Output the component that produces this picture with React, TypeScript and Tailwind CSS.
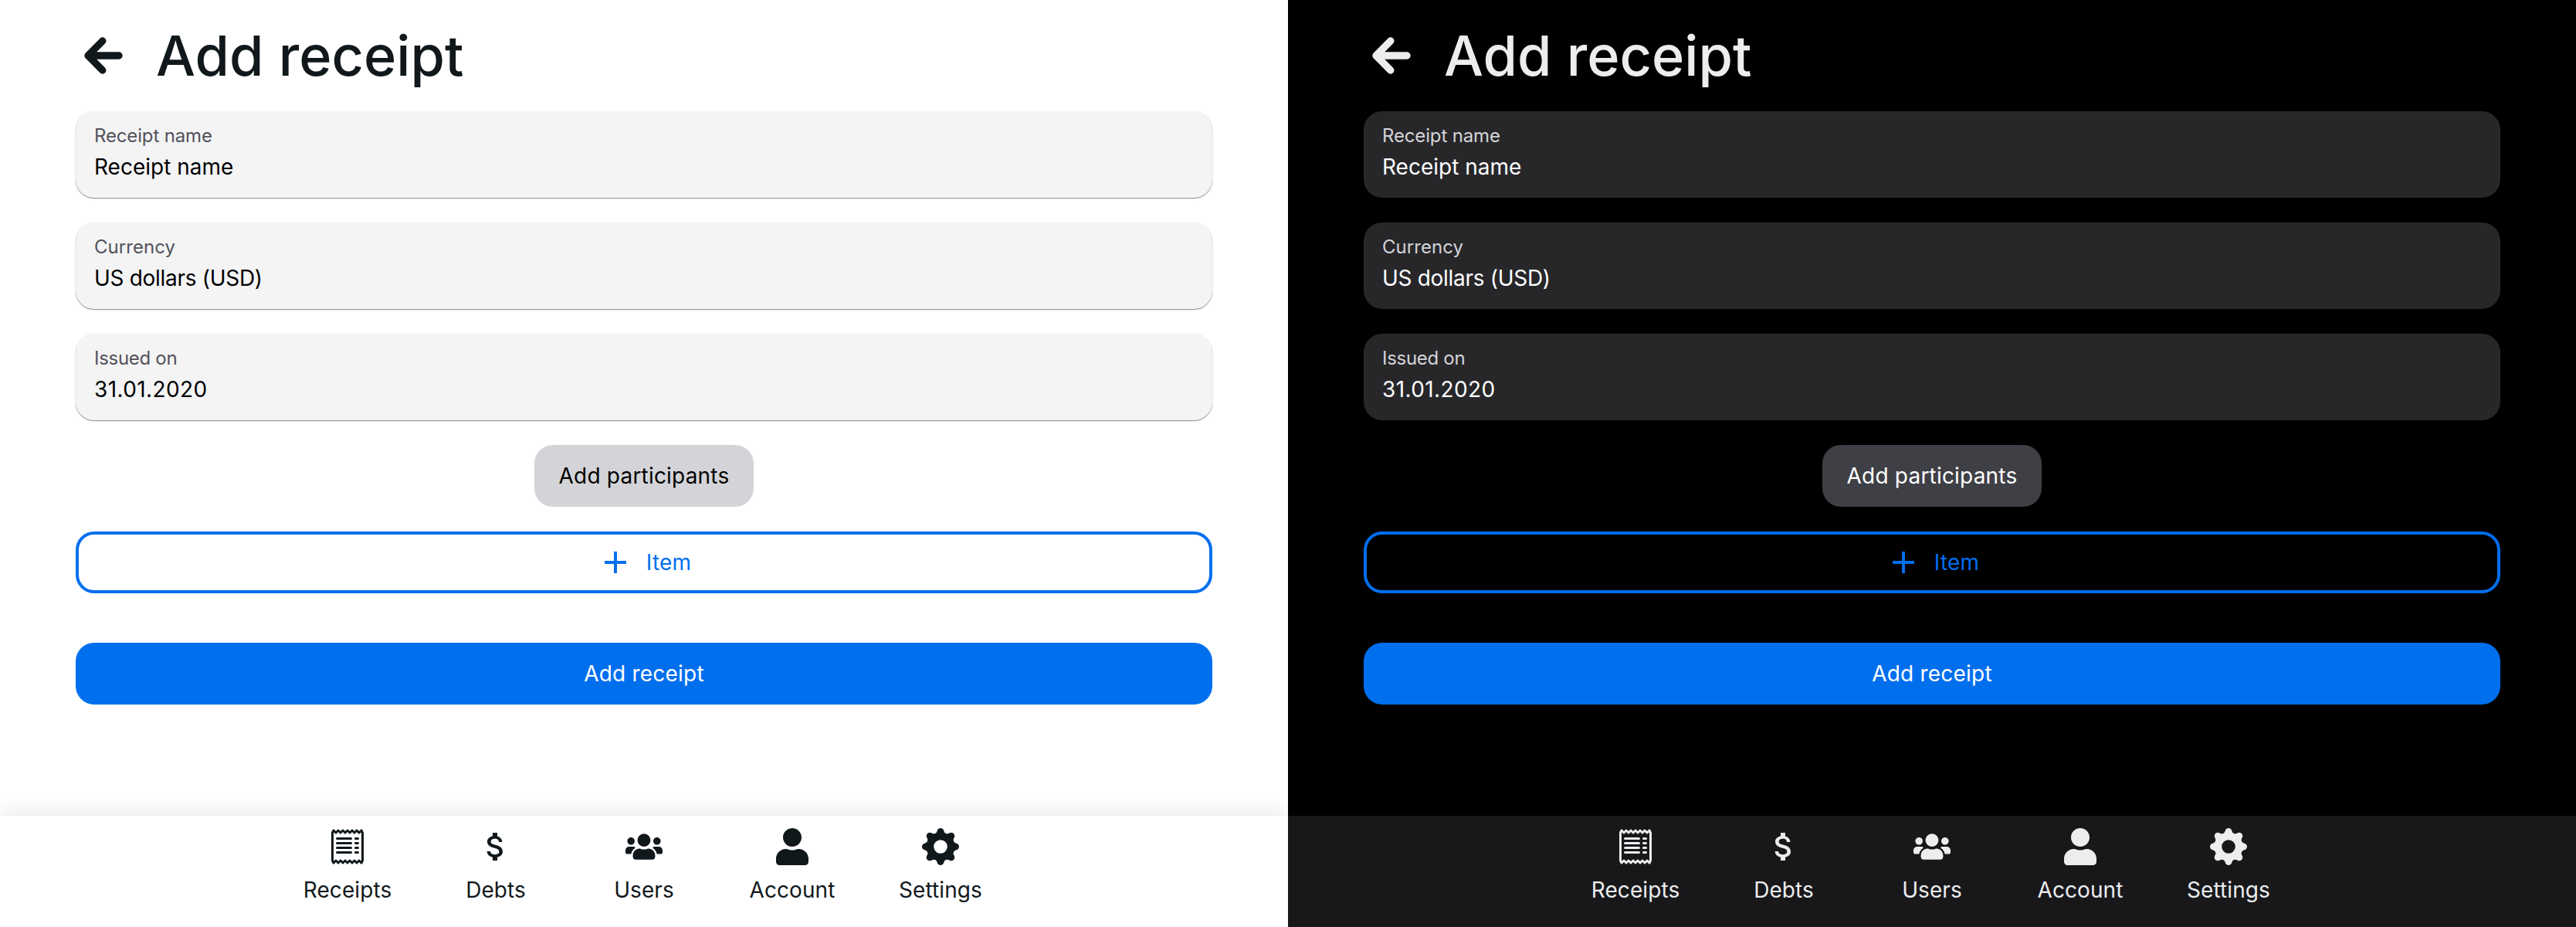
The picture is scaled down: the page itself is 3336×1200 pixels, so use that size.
import React from "react";
import { FaUser, FaUsers } from "react-icons/fa";
import { BsGearFill, BsReceipt } from "react-icons/bs";
import { MdAdd, MdAttachMoney } from "react-icons/md";

const fields = [
  { label: "Receipt name", value: "Receipt name", labelSpacing: "tracking-[-0.15px]", valueSpacing: "tracking-normal" },
  { label: "Currency", value: "US dollars (USD)", labelSpacing: "tracking-[0.05px]", valueSpacing: "tracking-[-0.3px]" },
  { label: "Issued on", value: "31.01.2020", labelSpacing: "tracking-[-0.3px]", valueSpacing: "tracking-[0.4px]" },
];

const navItems = [
  { label: "Receipts", Icon: BsReceipt },
  { label: "Debts", Icon: MdAttachMoney },
  { label: "Users", Icon: FaUsers },
  { label: "Account", Icon: FaUser },
  { label: "Settings", Icon: BsGearFill },
];

function BackArrow({ className }: { className: string }) {
  return (
    <svg viewBox="0 0 54 54" fill="none" stroke="currentColor" strokeWidth="9.4" strokeLinecap="round" strokeLinejoin="round" className={className}>
      <path d="M26.8 8 8 27l18.8 19M10 27h38" />
    </svg>
  );
}

function Field({ label, value, labelSpacing, valueSpacing, dark }: (typeof fields)[number] & { dark: boolean }) {
  return (
    <div
      className={`flex h-28 flex-col rounded-3xl px-6 pt-4 ${
        dark
          ? "bg-[#27272a]"
          : "bg-[#f4f4f5] shadow-[0_1px_3px_0_rgba(0,0,0,0.12),0_1px_1px_0_rgba(0,0,0,0.38)]"
      }`}
    >
      <span className={`text-[24px] leading-[32px] ${labelSpacing} ${dark ? "text-[#d4d4d8]" : "text-[#52525b]"}`}>{label}</span>
      <span className={`mt-1 text-[28px] leading-[40px] ${valueSpacing} ${dark ? "text-white" : "text-black"}`}>{value}</span>
    </div>
  );
}

function Screen({ dark }: { dark: boolean }) {
  return (
    <section className={`flex h-[1200px] w-[1668px] flex-col overflow-hidden ${dark ? "bg-black text-[#ecedee]" : "bg-white text-[#11181c]"}`}>
      <main className="flex flex-1 flex-col px-[98px]">
        <header className="flex h-36 items-center">
          <BackArrow className="ml-2 size-[54px]" />
          <h1 className="ml-[42px] text-[72px] leading-[80px] font-medium">Add receipt</h1>
        </header>
        <div className="flex flex-col gap-8">
          {fields.map((f) => (
            <Field key={f.label} {...f} dark={dark} />
          ))}
          <button className={`h-20 w-[284px] self-center rounded-3xl text-[28px] tracking-[0.2px] ${dark ? "bg-[#3f3f46] text-white" : "bg-[#d4d4d8] text-black"}`}>
            Add participants
          </button>
          <button className="flex h-20 items-center justify-center gap-4 rounded-3xl border-4 border-[#006fee] text-[28px] tracking-[0.2px] text-[#006fee]">
            <MdAdd className="size-12" />
            Item
          </button>
          <button className="mt-8 h-20 rounded-3xl bg-[#006fee] text-[28px] tracking-[0.2px] text-white">Add receipt</button>
        </div>
      </main>
      <nav
        className={`flex h-36 justify-center ${
          dark ? "bg-[#18181b]" : "bg-white shadow-[0_0_30px_0_rgba(0,0,0,0.12)]"
        }`}
      >
        {navItems.map(({ label, Icon }) => (
          <a key={label} className="flex w-48 flex-col items-center pt-4 text-[28px] tracking-[0.08px]">
            <Icon className="size-12" />
            <span className="mt-3 leading-[40px]">{label}</span>
          </a>
        ))}
      </nav>
    </section>
  );
}

export default function App() {
  return (
    <div className="flex w-[3336px] font-['Inter',sans-serif]">
      <Screen dark={false} />
      <Screen dark={true} />
    </div>
  );
}
